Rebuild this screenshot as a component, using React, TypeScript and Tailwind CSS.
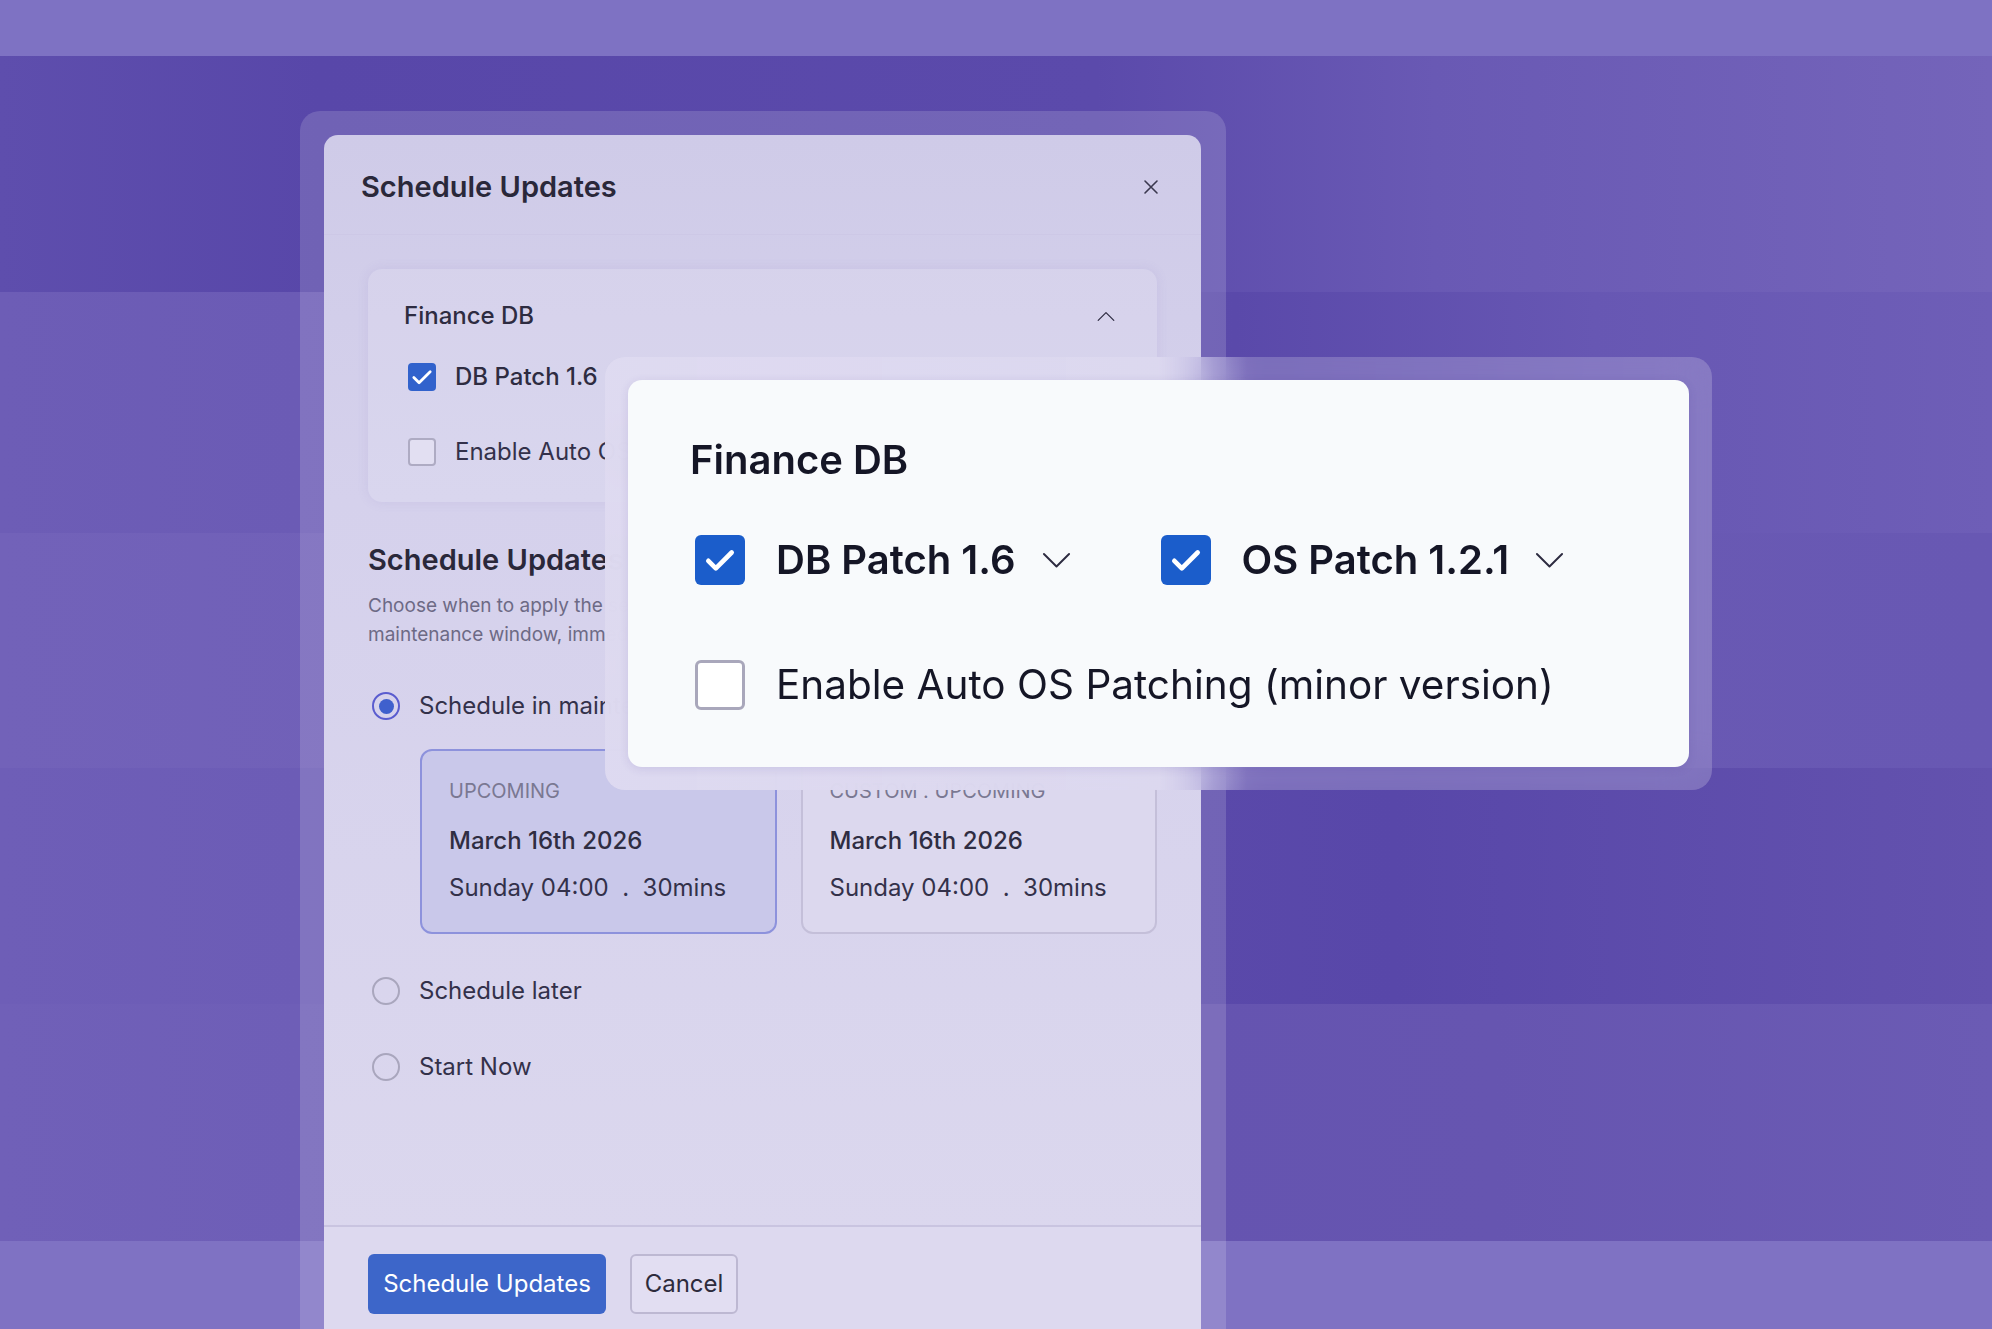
import React from 'react';

function Check({ size = 28, big = false }: { size?: number; big?: boolean }) {
  return (
    <span
      className={
        big
          ? 'flex h-[50px] w-[50px] shrink-0 items-center justify-center rounded-[6px] bg-[#1b5dcb]'
          : 'flex h-[28px] w-[28px] shrink-0 items-center justify-center rounded-[4px] bg-[#3162cc]'
      }
    >
      <svg width={size} height={size} viewBox="0 0 24 24" fill="none">
        <path d="M5 12.5l4.5 4.5L19 7.5" stroke="#fff" strokeWidth={big ? 2.8 : 2.4} strokeLinecap="round" strokeLinejoin="round" />
      </svg>
    </span>
  );
}

function EmptyBox({ big = false }: { big?: boolean }) {
  return big ? (
    <span className="h-[50px] w-[50px] shrink-0 rounded-[6px] border-[3px] border-[#a9a7bb] bg-white" />
  ) : (
    <span className="h-[28px] w-[28px] shrink-0 rounded-[4px] border-2 border-[#aeabc3] bg-[#e2dff2]" />
  );
}

function Chevron({ up = false, w = 29 }: { up?: boolean; w?: number }) {
  return (
    <svg width={w} height={w / 2 + 2} viewBox="0 0 30 17" fill="none">
      <path d={up ? 'M2 15L15 2l13 13' : 'M2 2l13 13L28 2'} stroke="#2d2b40" strokeWidth="2" strokeLinecap="round" strokeLinejoin="round" />
    </svg>
  );
}

function Radio({ on, label }: { on?: boolean; label: string }) {
  return (
    <div className="flex h-[32px] items-center gap-[19px] pl-[4px]">
      {on ? (
        <span className="flex h-[28px] w-[28px] items-center justify-center rounded-full border-2 border-[#5a5ccf]">
          <span className="h-[15px] w-[15px] rounded-full bg-[#3f60cd]" />
        </span>
      ) : (
        <span className="h-[28px] w-[28px] rounded-full border-2 border-[#a9a6bd]" />
      )}
      <span className="whitespace-nowrap text-[24px] text-[#33314a]">{label}</span>
    </div>
  );
}

function SlotCard({ tag, active }: { tag: string; active?: boolean }) {
  return (
    <div
      className={
        active
          ? 'h-[185px] rounded-[12px] border-2 border-[#8d92dc] bg-[#c9c8ea] px-[27px] pt-[24px]'
          : 'h-[185px] rounded-[12px] border-2 border-[#c4bfd9] bg-[#dcd8ee] px-[27px] pt-[24px]'
      }
    >
      <div className="h-[32px] text-[20px] leading-[32px] text-[#7a7892]">{tag}</div>
      <div className="mt-[18px] h-[32px] text-[24px] font-medium leading-[32px] text-[#2f2d42]">March 16th 2026</div>
      <div className="mt-[15px] h-[32px] whitespace-pre text-[24px] leading-[32px] text-[#33314a]">Sunday 04:00  .  30mins</div>
    </div>
  );
}

export default function App() {
  return (
    <div className="relative h-[1329px] w-[1992px] overflow-hidden font-['Inter','Liberation_Sans',sans-serif]">
      {/* backdrop bands */}
      <div className="absolute inset-0 flex flex-col">
        <div className="h-[56px] bg-[#7e72c3]" />
        <div className="h-[236px] bg-[linear-gradient(90deg,#5e4ead_0%,#5847a9_16%,#5b4aab_55%,#6959b4_72%,#7464ba_100%)]" />
        <div className="h-[241px] bg-[linear-gradient(90deg,#6d5db6_0%,#6b5bb5_15%,#5f4fad_55%,#5a49aa_62%,#6757b3_80%,#6e5eb7_100%)]" />
        <div className="h-[235px] bg-[linear-gradient(90deg,#7262b9_0%,#7060b8_20%,#6a5ab4_60%,#6858b3_100%)]" />
        <div className="h-[236px] bg-[linear-gradient(90deg,#6e5eb7_0%,#6c5cb6_15%,#5a49aa_60%,#5847a9_70%,#6352ae_100%)]" />
        <div className="h-[237px] bg-[linear-gradient(90deg,#7060b8_0%,#6e5eb7_15%,#6554b0_60%,#6655b0_75%,#6b5bb4_100%)]" />
        <div className="flex-1 bg-[#7f72c3]" />
      </div>

      {/* modal */}
      <div className="relative ml-[300px] mt-[111px] w-[926px] rounded-[20px] bg-white/15 px-[24px] pt-[24px]">
        <div className="w-[877px] rounded-t-[14px] bg-[linear-gradient(180deg,#cfcbe8_0%,#d5d1ec_30%,#dcd8ee_100%)]">
          <div className="flex h-[100px] items-center justify-between border-b border-[#cdc8e6] pl-[37px] pr-[42px] pt-[5px]">
            <h1 className="text-[29px] font-semibold text-[#2a283a]">Schedule Updates</h1>
            <svg width="16" height="16" viewBox="0 0 16 16" fill="none">
              <path d="M2 2l12 12M14 2L2 14" stroke="#3a384e" strokeWidth="1.6" strokeLinecap="round" />
            </svg>
          </div>

          <div className="flex h-[990px] flex-col px-[44px] pt-[34px]">
            <div className="h-[233px] rounded-[14px] bg-white/10 px-[36px] pt-[31px] shadow-[0_0_12px_rgba(120,110,190,0.12)]">
              <div className="flex h-[32px] items-center justify-between pr-[6px]">
                <span className="text-[24px] font-medium text-[#2e2c41]">Finance DB</span>
                <Chevron up w={18} />
              </div>
              <div className="mt-[29px] flex h-[32px] items-center gap-[19px] pl-[4px]">
                <Check />
                <span className="text-[24px] font-medium text-[#2e2c41]">DB Patch 1.6</span>
              </div>
              <div className="mt-[43px] flex h-[32px] items-center gap-[19px] pl-[4px]">
                <EmptyBox />
                <span className="whitespace-nowrap text-[24px] text-[#33314a]">Enable Auto OS Patching (minor version)</span>
              </div>
            </div>

            <h2 className="mt-[40px] h-[36px] text-[29px] font-semibold leading-[36px] text-[#2a283a]">Schedule Updates</h2>
            <p className="mt-[13px] text-[19px] leading-[29px] text-[#6d6a85]">
              <span className="block">Choose when to apply the selected updates. You can use the next</span>
              <span className="block">maintenance window, immediately start now, or schedule them later.</span>
            </p>

            <div className="mt-[41px]">
              <Radio on label="Schedule in maintenance window" />
            </div>
            <div className="mt-[27px] grid grid-cols-2 gap-[24px] pl-[52px]">
              <SlotCard tag="UPCOMING" active />
              <SlotCard tag="CUSTOM . UPCOMING" />
            </div>
            <div className="mt-[41px]">
              <Radio label="Schedule later" />
            </div>
            <div className="mt-[44px]">
              <Radio label="Start Now" />
            </div>
          </div>

          <div className="flex gap-[24px] border-t-2 border-[#c9c4e0] bg-[#ddd9ef] px-[44px] pt-[27px] pb-[40px]">
            <button className="h-[60px] w-[238px] rounded-[6px] bg-[#3d66c9] text-[24px] text-white">Schedule Updates</button>
            <button className="h-[60px] w-[108px] rounded-[6px] border-2 border-[#bdb8d2] bg-[#e2def2] text-[24px] text-[#2d2b3c]">Cancel</button>
          </div>
        </div>
      </div>

      {/* floating patch popover */}
      <div className="absolute left-[605px] top-[357px] h-[433px] w-[1107px] rounded-[20px] bg-[linear-gradient(90deg,rgba(222,218,240,0.96)_0%,rgba(220,216,239,0.95)_50%,rgba(190,184,226,0.6)_55%,rgba(255,255,255,0.2)_58%,rgba(255,255,255,0.2)_100%)] p-[23px] backdrop-blur-xl">
        <div className="h-full rounded-[14px] bg-[#f8fafc] pl-[62px] pt-[55px] shadow-[0_2px_10px_rgba(60,40,140,0.12)]">
          <div className="h-[49px] text-[40px] font-semibold leading-[49px] text-[#151626]">Finance DB</div>
          <div className="ml-[5px] mt-[51px] flex h-[50px] items-center">
            <Check big size={40} />
            <span className="ml-[31px] text-[40px] font-semibold text-[#151626]">DB Patch 1.6</span>
            <span className="ml-[26px]"><Chevron /></span>
            <span className="ml-[90px]"><Check big size={40} /></span>
            <span className="ml-[31px] text-[40px] font-semibold text-[#151626]">OS Patch 1.2.1</span>
            <span className="ml-[26px]"><Chevron /></span>
          </div>
          <div className="ml-[5px] mt-[75px] flex h-[50px] items-center">
            <EmptyBox big />
            <span className="ml-[31px] text-[40.5px] text-[#151626]">Enable Auto OS Patching (minor version)</span>
          </div>
        </div>
      </div>
    </div>
  );
}
